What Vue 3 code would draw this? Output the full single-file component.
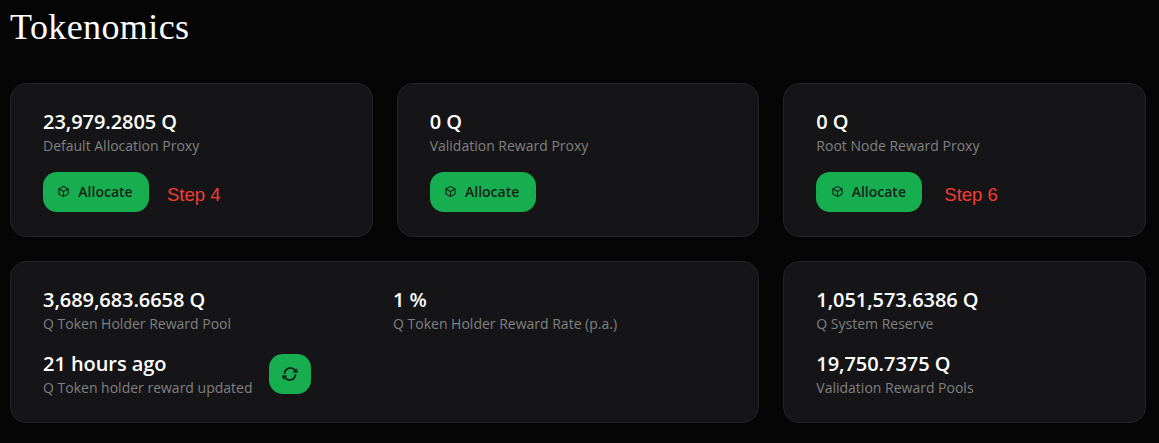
<template>
<div class="page">
    <h1 class="title">Tokenomics</h1>
    <div class="grid">
        <div v-for="p in proxies" :key="p.label" class="card card-proxy">
            <p class="value">{{ p.value }}</p>
            <p class="label">{{ p.label }}</p>
            <div class="actions">
                <button type="button" class="btn-allocate">
                    <svg class="cube" viewBox="0 0 24 24" fill="none" stroke="currentColor" stroke-width="2" stroke-linejoin="round" stroke-linecap="round">
                        <path d="M12 2.5l8.5 4.8v9.4L12 21.5l-8.5-4.8V7.3z" />
                        <path d="M3.8 7.4L12 12l8.2-4.6M12 12v9.2" />
                    </svg>
                    Allocate
                </button>
                <span v-if="p.step" class="step" :style="{ marginLeft: p.stepGap + 'px' }">{{ p.step }}</span>
            </div>
        </div>

        <div class="card card-wide">
            <div class="wide-row">
                <div class="stat stat-pool">
                    <p class="value">3,689,683.6658 Q</p>
                    <p class="label">Q Token Holder Reward Pool</p>
                </div>
                <div class="stat">
                    <p class="value">1 %</p>
                    <p class="label">Q Token Holder Reward Rate (p.a.)</p>
                </div>
            </div>
            <div class="updated">
                <div class="stat">
                    <p class="value">21 hours ago</p>
                    <p class="label">Q Token holder reward updated</p>
                </div>
                <button type="button" class="btn-refresh" aria-label="Refresh">
                    <svg viewBox="0 0 24 24" fill="none" stroke="currentColor" stroke-width="2.2" stroke-linecap="round" stroke-linejoin="round">
                        <path d="M5.5 11a6.8 6.8 0 0 1 11.6-4.2l1.6 2" />
                        <path d="M18.5 13a6.8 6.8 0 0 1-11.6 4.2l-1.6-2" />
                        <path d="M21 9.8h-5l3.2-3.8zM3 14.2h5l-3.2 3.8z" fill="currentColor" stroke-width="1" />
                    </svg>
                </button>
            </div>
        </div>

        <div class="card card-reserve">
            <div class="stat">
                <p class="value">1,051,573.6386 Q</p>
                <p class="label">Q System Reserve</p>
            </div>
            <div class="stat">
                <p class="value">19,750.7375 Q</p>
                <p class="label">Validation Reward Pools</p>
            </div>
        </div>
    </div>
</div>
</template>

<script setup>
const proxies = [
    { value: '23,979.2805 Q', label: 'Default Allocation Proxy', step: 'Step 4', stepGap: 18 },
    { value: '0 Q', label: 'Validation Reward Proxy' },
    { value: '0 Q', label: 'Root Node Reward Proxy', step: 'Step 6', stepGap: 22 }
]
</script>

<style>
html,
body {
    background: #050506;
}
</style>

<style scoped>
.page {
    box-sizing: border-box;
    width: 1159px;
    height: 443px;
    padding: 0 13px 0 10px;
    overflow: hidden;
    background: #050506;
    font-family: "Open Sans", sans-serif;
}

.title {
    margin: 0;
    padding-top: 7px;
    height: 83px;
    box-sizing: border-box;
    font-family: "Liberation Serif", serif;
    font-size: 36px;
    line-height: 40px;
    letter-spacing: 0.4px;
    font-weight: 400;
    color: #fff;
}

.grid {
    display: grid;
    grid-template-columns: repeat(3, 1fr);
    gap: 24px;
}

.card {
    box-sizing: border-box;
    padding: 24px 32px;
    background: #151517;
    border: 1px solid #222326;
    border-radius: 16px;
}

.card-proxy {
    height: 154px;
}

.card-wide {
    grid-column: span 2;
    height: 162px;
}

.card-reserve {
    height: 162px;
}

.stat + .stat {
    margin-top: 16px;
}

.value {
    margin: 0;
    font-size: 20px;
    line-height: 28px;
    font-weight: 600;
    letter-spacing: -0.06px;
    color: #fff;
}

.label {
    margin: 0;
    font-size: 14px;
    line-height: 20px;
    color: #808081;
}

.actions {
    display: flex;
    align-items: center;
    margin-top: 16px;
}

.btn-allocate {
    display: flex;
    align-items: center;
    justify-content: center;
    gap: 8px;
    width: 106px;
    height: 40px;
    padding: 0 2px 1px 0;
    border: none;
    border-radius: 14px;
    background: #17ae50;
    color: #13231a;
    font-family: inherit;
    font-size: 14px;
    font-weight: 600;
}

.cube {
    width: 13px;
    height: 13px;
}

.step {
    margin-top: 5px;
    font-family: "Liberation Sans", sans-serif;
    font-size: 18.5px;
    color: #f63a33;
}

.wide-row {
    display: flex;
}

.stat-pool {
    width: 350px;
}

.wide-row .stat + .stat {
    margin-top: 0;
}

.updated {
    display: flex;
    align-items: center;
    margin-top: 16px;
}

.btn-refresh {
    display: flex;
    align-items: center;
    justify-content: center;
    width: 42px;
    height: 40px;
    margin-left: 17px;
    padding: 0;
    border: none;
    border-radius: 14px;
    background: #17ae50;
    color: #13231a;
}

.btn-refresh svg {
    width: 20px;
    height: 20px;
}
</style>
